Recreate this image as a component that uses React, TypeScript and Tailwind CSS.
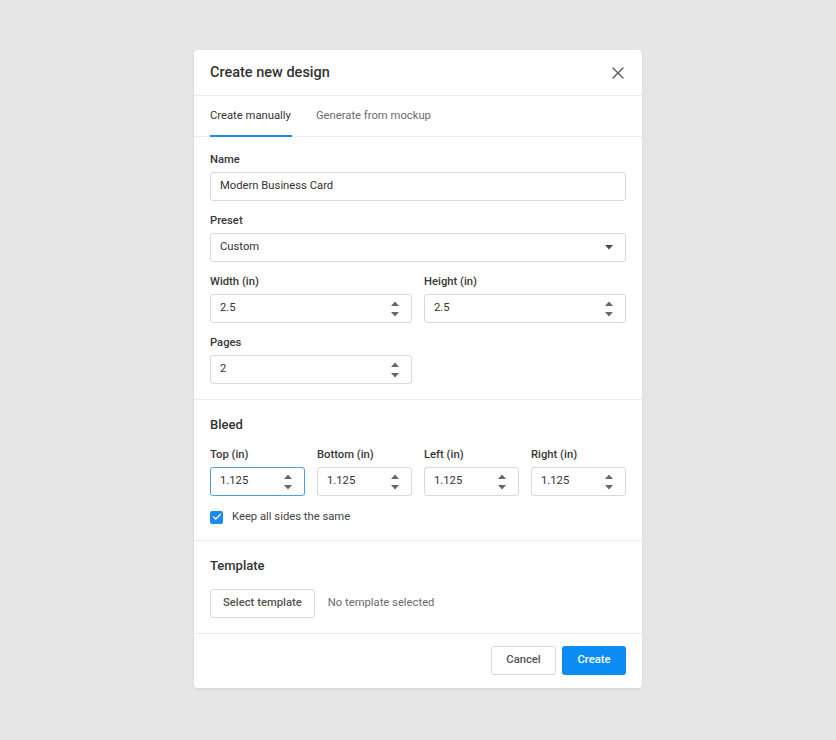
import { X, Check } from 'lucide-react';

const font = { fontFamily: 'Roboto, "Liberation Sans", sans-serif' };

function Spinner() {
  return (
    <div className="flex flex-col items-center gap-[6px] mr-[12px]">
      <svg width="8" height="5" viewBox="0 0 8 5"><path d="M4 0.5L8 5H0z" fill="#63676b" /></svg>
      <svg width="8" height="5" viewBox="0 0 8 5"><path d="M0 0h8L4 4.5z" fill="#63676b" /></svg>
    </div>
  );
}

function NumberField({ label, value, focused }: { label: string; value: string; focused?: boolean }) {
  return (
    <div>
      <div className="text-[11.25px] font-medium text-[#383838] leading-4 mb-1 pt-[1px] -mt-[1px]">{label}</div>
      <div
        className={`h-[29px] rounded-[3px] border flex items-center justify-between pl-[9px] bg-white ${
          focused ? 'border-[#4c9ee8]' : 'border-[#d9d9d9]'
        }`}
      >
        <span className="text-[11.25px] text-[#333]">{value}</span>
        <Spinner />
      </div>
    </div>
  );
}

export default function App() {
  return (
    <div className="min-h-[740px] w-full bg-[#e6e6e6] flex justify-center pt-[50px]" style={font}>
      <div className="w-[448px] h-[638px] bg-white rounded-[4px] shadow-[0_1px_3px_rgba(0,0,0,0.08)] flex flex-col">
        {/* header */}
        <div className="h-[46px] flex items-center justify-between pl-4 pr-[15px] border-b border-[#ececec]">
          <h2 className="text-[14.5px] font-medium text-[#333]">Create new design</h2>
          <X className="w-[20px] h-[20px] text-[#5a5a5a] -mr-[1px]" strokeWidth={1.6} />
        </div>

        {/* tabs */}
        <div className="h-[41px] flex gap-[25px] px-4 border-b border-[#ececec]">
          <div className="relative flex items-center text-[11.25px] text-[#333]">
            Create manually
            <div className="absolute left-0 -right-[1px] bottom-[-1px] h-[2px] bg-[#1a8cf0]" />
          </div>
          <div className="flex items-center text-[11.25px] text-[#6b6b6b]">Generate from mockup</div>
        </div>

        {/* main fields */}
        <div className="px-4 pt-[15px] pb-[15px] border-b border-[#ececec] flex flex-col gap-3">
          <div>
            <div className="text-[11.25px] font-medium text-[#383838] leading-4 mb-1 pt-[1px] -mt-[1px]">Name</div>
            <div className="h-[29px] rounded-[3px] border border-[#d9d9d9] flex items-center pl-[9px]">
              <span className="text-[11.25px] text-[#333]">Modern Business Card</span>
            </div>
          </div>
          <div>
            <div className="text-[11.25px] font-medium text-[#383838] leading-4 mb-1 pt-[1px] -mt-[1px]">Preset</div>
            <div className="h-[29px] rounded-[3px] border border-[#d9d9d9] flex items-center justify-between pl-[9px] pr-[12px]">
              <span className="text-[11.25px] text-[#333]">Custom</span>
              <svg width="8" height="5" viewBox="0 0 8 5"><path d="M0 0h8L4 4.5z" fill="#4a4a4a" /></svg>
            </div>
          </div>
          <div className="grid grid-cols-2 gap-3">
            <NumberField label="Width (in)" value="2.5" />
            <NumberField label="Height (in)" value="2.5" />
          </div>
          <div className="grid grid-cols-2 gap-3">
            <NumberField label="Pages" value="2" />
          </div>
        </div>

        {/* bleed */}
        <div className="px-4 pt-4 pb-[15px] border-b border-[#ececec]">
          <div className="text-[13px] font-medium text-[#333] leading-[18px] mb-[13px]">Bleed</div>
          <div className="grid grid-cols-4 gap-3">
            <NumberField label="Top (in)" value="1.125" focused />
            <NumberField label="Bottom (in)" value="1.125" />
            <NumberField label="Left (in)" value="1.125" />
            <NumberField label="Right (in)" value="1.125" />
          </div>
          <div className="h-4 flex items-center gap-[9px] mt-[13px]">
            <div className="w-[13px] h-[13px] rounded-[2px] bg-[#1a8cf0] flex items-center justify-center">
              <Check className="w-[10px] h-[10px] text-white" strokeWidth={3} />
            </div>
            <span className="text-[11.25px] text-[#444]">Keep all sides the same</span>
          </div>
        </div>

        {/* template */}
        <div className="px-4 pt-4 pb-[15px] border-b border-[#ececec]">
          <div className="text-[13px] font-medium text-[#333] leading-[18px] mb-[14px]">Template</div>
          <div className="flex items-center gap-[13px]">
            <button className="h-[29px] px-3 rounded-[3px] border border-[#d9d9d9] text-[11.25px] font-medium text-[#555] bg-white">
              Select template
            </button>
            <span className="text-[11.25px] text-[#6b6b6b]">No template selected</span>
          </div>
        </div>

        {/* footer */}
        <div className="flex-1 flex items-start justify-end gap-[6px] px-4 pt-3">
          <button className="h-[29px] w-[65px] rounded-[3px] border border-[#d9d9d9] text-[11.25px] font-medium text-[#555] bg-white">
            Cancel
          </button>
          <button className="h-[29px] w-[64px] rounded-[3px] bg-[#0b8df5] text-[11.25px] font-medium text-white">
            Create
          </button>
        </div>
      </div>
    </div>
  );
}
